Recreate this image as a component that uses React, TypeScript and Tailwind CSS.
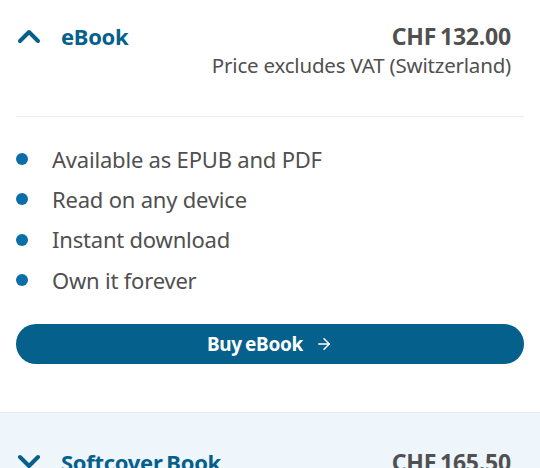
import { ArrowRight } from "lucide-react";

const features = [
  "Available as EPUB and PDF",
  "Read on any device",
  "Instant download",
  "Own it forever",
];

function Chevron({ up }: { up?: boolean }) {
  return (
    <svg width="24" height="16" viewBox="0 0 24 16" className="text-[#05608c] shrink-0">
      <polyline
        points={up ? "3,13 12,4 21,13" : "3,3 12,12 21,3"}
        fill="none"
        stroke="currentColor"
        strokeWidth="4"
        strokeLinecap="round"
        strokeLinejoin="round"
      />
    </svg>
  );
}

export default function App() {
  return (
    <div
      className="w-[540px] h-[468px] overflow-hidden bg-white"
      style={{ fontFamily: '"Noto Sans", "Open Sans", sans-serif' }}
    >
      <div className="px-4">
        <div className="flex justify-between pt-[21px] pb-[37px] border-b border-[#eeeeee]">
          <div className="flex items-center gap-[20px] h-[30px] pl-[1px]">
            <Chevron up />
            <span className="text-[22px] font-bold text-[#05608c] tracking-[-0.3px]">eBook</span>
          </div>
          <div className="flex flex-col items-end pr-[13px]">
            <span className="text-[23px] leading-[30px] font-bold text-[#505050] tracking-[-0.2px] [word-spacing:-2px]">
              CHF 132.00
            </span>
            <span className="text-[20.5px] leading-[28px] text-[#505050] tracking-[-0.2px]">
              Price excludes VAT (Switzerland)
            </span>
          </div>
        </div>

        <ul className="pt-[22px] flex flex-col">
          {features.map((f) => (
            <li key={f} className="flex items-center h-[40.3px] gap-[24px]">
              <span className="w-[12px] h-[12px] rounded-full bg-[#0a6ea8] shrink-0" />
              <span className="text-[22px] text-[#505050] tracking-[-0.2px]">{f}</span>
            </li>
          ))}
        </ul>

        <button className="mt-[24px] w-full h-[40px] rounded-full bg-[#05608c] text-white font-bold text-[19px] flex items-center justify-center gap-[12px]">
          <span className="tracking-[-0.3px] [word-spacing:-1.5px]">Buy eBook</span>
          <ArrowRight className="w-[18px] h-[18px]" strokeWidth={2} />
        </button>
      </div>

      <div className="mt-[48px] border-t border-[#e4ebf1] bg-[#eef5fb] h-[100px] px-4">
        <div className="flex justify-between pt-[34px] pr-[13px]">
          <div className="flex items-center gap-[20px] h-[30px] pl-[1px]">
            <Chevron />
            <span className="text-[22px] font-bold text-[#05608c] tracking-[-0.3px] [word-spacing:-1.5px]">
              Softcover Book
            </span>
          </div>
          <span className="text-[23px] leading-[30px] font-bold text-[#505050] tracking-[-0.2px] [word-spacing:-2px]">
            CHF 165.50
          </span>
        </div>
      </div>
    </div>
  );
}
